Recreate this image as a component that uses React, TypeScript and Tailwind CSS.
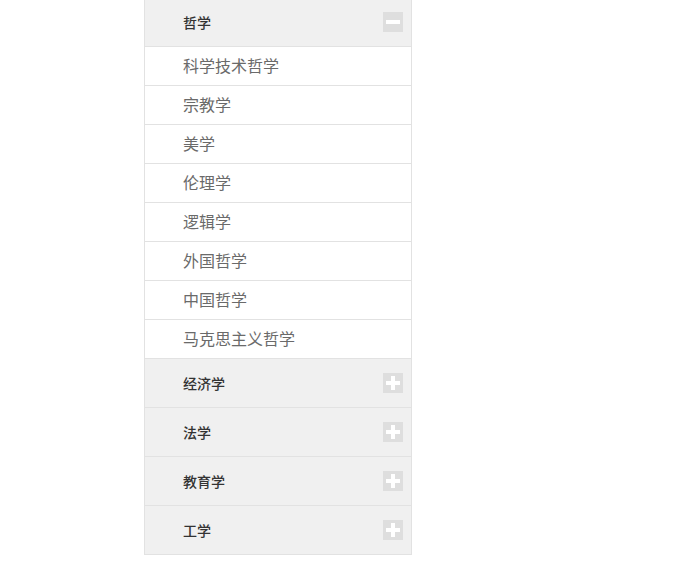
import { useState } from "react";

const groups = [
  {
    title: "哲学",
    items: ["科学技术哲学", "宗教学", "美学", "伦理学", "逻辑学", "外国哲学", "中国哲学", "马克思主义哲学"],
  },
  { title: "经济学", items: [] as string[] },
  { title: "法学", items: [] as string[] },
  { title: "教育学", items: [] as string[] },
  { title: "工学", items: [] as string[] },
];

function ToggleIcon({ open }: { open: boolean }) {
  return (
    <span className="relative flex h-[20px] w-[20px] items-center justify-center bg-[#dedede]">
      <span className="block h-[4px] w-[14px] bg-white" />
      {!open && <span className="absolute block h-[14px] w-[4px] bg-white" />}
    </span>
  );
}

export default function App() {
  const [open, setOpen] = useState(0);

  return (
    <div
      className="min-h-screen bg-white"
      style={{ fontFamily: '"Microsoft YaHei", "Noto Sans CJK SC", sans-serif' }}
    >
      <div className="ml-[144px] -mt-[3px] w-[268px] border border-[#e2e2e2]">
        {groups.map((g, i) => (
          <div key={g.title} className={i > 0 ? "border-t border-[#e2e2e2]" : ""}>
            <button
              onClick={() => setOpen(open === i ? -1 : i)}
              className="flex h-[48px] w-full items-center justify-between bg-[#f0f0f0] pl-[38px] pr-[8px] text-left"
            >
              <span className="text-[14px] font-medium text-[#333]">{g.title}</span>
              <ToggleIcon open={open === i} />
            </button>
            {open === i &&
              g.items.map((item) => (
                <div
                  key={item}
                  className="flex h-[39px] items-center border-t border-[#e2e2e2] bg-white pb-[2px] pl-[38px] text-[16px] text-[#6a6a6a]"
                >
                  {item}
                </div>
              ))}
          </div>
        ))}
      </div>
    </div>
  );
}
